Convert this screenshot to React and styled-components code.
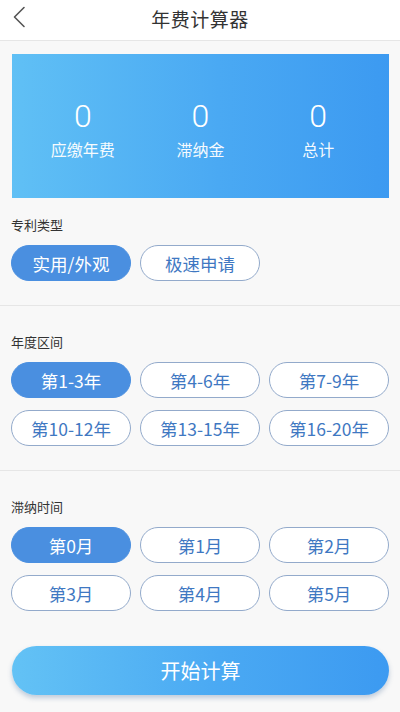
import React, { useState } from 'react';
import styled, { createGlobalStyle } from 'styled-components';

const GlobalStyle = createGlobalStyle`
  * { box-sizing: border-box; }
  body {
    margin: 0;
    background: #f8f8f8;
    font-family: "Noto Sans CJK SC", "Noto Sans", sans-serif;
    color: #333;
  }
`;

const patentTypes = ['实用/外观', '极速申请'];
const yearRanges = ['第1-3年', '第4-6年', '第7-9年', '第10-12年', '第13-15年', '第16-20年'];
const lateMonths = ['第0月', '第1月', '第2月', '第3月', '第4月', '第5月'];

const totals = [
  { value: 0, label: '应缴年费' },
  { value: 0, label: '滞纳金' },
  { value: 0, label: '总计' }
];

const App = () => {
  const [type, setType] = useState(0);
  const [year, setYear] = useState(0);
  const [month, setMonth] = useState(0);

  return (
    <Page>
      <GlobalStyle />
      <Header>
        <BackButton aria-label="返回">
          <svg width="14" height="22" viewBox="0 0 14 22" fill="none">
            <path d="M12 1.5 L2.5 11 L12 20.5" stroke="#555" strokeWidth="1.6" strokeLinecap="round" strokeLinejoin="round" />
          </svg>
        </BackButton>
        <Title>年费计算器</Title>
      </Header>

      <CardWrap>
        <ResultCard>
          {totals.map((item) => (
            <ResultItem key={item.label}>
              <ResultValue>{item.value}</ResultValue>
              <ResultLabel>{item.label}</ResultLabel>
            </ResultItem>
          ))}
        </ResultCard>
      </CardWrap>

      <Section $first>
        <SectionLabel>专利类型</SectionLabel>
        <ChipGrid>
          {patentTypes.map((t, i) => (
            <Chip key={t} $active={type === i} onClick={() => setType(i)}>{t}</Chip>
          ))}
        </ChipGrid>
      </Section>

      <Section>
        <SectionLabel>年度区间</SectionLabel>
        <ChipGrid>
          {yearRanges.map((t, i) => (
            <Chip key={t} $active={year === i} onClick={() => setYear(i)}>{t}</Chip>
          ))}
        </ChipGrid>
      </Section>

      <Section $last>
        <SectionLabel>滞纳时间</SectionLabel>
        <ChipGrid>
          {lateMonths.map((t, i) => (
            <Chip key={t} $active={month === i} onClick={() => setMonth(i)}>{t}</Chip>
          ))}
        </ChipGrid>
      </Section>

      <Footer>
        <SubmitButton>开始计算</SubmitButton>
      </Footer>
    </Page>
  );
};

const Page = styled.div`
  width: 400px;
  min-height: 712px;
  background: #f8f8f8;
`;

const Header = styled.header`
  position: relative;
  height: 41px;
  background: #fff;
  border-bottom: 1px solid #e6e6e6;
  display: flex;
  align-items: center;
  justify-content: center;
`;

const BackButton = styled.button`
  position: absolute;
  left: 7px;
  top: 3px;
  width: 24px;
  height: 28px;
  padding: 0;
  border: none;
  background: none;
  display: flex;
  align-items: center;
  justify-content: center;
`;

const Title = styled.h1`
  margin: 0 0 4px;
  font-size: 19px;
  font-weight: 400;
  color: #333;
  letter-spacing: 0.5px;
`;

const CardWrap = styled.div`
  padding: 13px 11px 0 12px;
`;

const ResultCard = styled.div`
  height: 144px;
  padding: 4px 12px 0;
  display: grid;
  grid-template-columns: repeat(3, 1fr);
  align-items: center;
  background: linear-gradient(90deg, #60c0f5 0%, #4aa9f3 55%, #3c9af1 100%);
`;

const ResultItem = styled.div`
  display: flex;
  flex-direction: column;
  align-items: center;
  color: #fff;
`;

const ResultValue = styled.div`
  font-family: Roboto, "Noto Sans", sans-serif;
  font-weight: 300;
  font-size: 32px;
  line-height: 38px;
`;

const ResultLabel = styled.div`
  font-size: 16px;
  line-height: 22px;
  margin-top: 3px;
  opacity: 0.95;
`;

const Section = styled.section`
  padding: ${(p) => (p.$first ? '19px' : '28px')} 11px ${(p) => (p.$last ? '0' : '24px')};
  border-bottom: ${(p) => (p.$last ? 'none' : '1px solid #e6e6e6')};
`;

const SectionLabel = styled.div`
  font-size: 13px;
  line-height: 16px;
  color: #333;
  margin-bottom: 12px;
`;

const ChipGrid = styled.div`
  display: grid;
  grid-template-columns: repeat(3, 120px);
  column-gap: 9px;
  row-gap: 12px;
`;

const Chip = styled.button`
  height: 36px;
  border-radius: 18px;
  font-family: inherit;
  font-size: 17.5px;
  padding: 0;
  cursor: pointer;
  border: 1px solid ${(p) => (p.$active ? '#4a8fe0' : '#93aacb')};
  background: ${(p) => (p.$active ? '#4a8fe0' : '#fff')};
  color: ${(p) => (p.$active ? '#fff' : '#3f78c2')};
`;

const Footer = styled.div`
  padding: 35px 11px 0 12px;
`;

const SubmitButton = styled.button`
  width: 100%;
  height: 49px;
  border: none;
  border-radius: 25px;
  font-family: inherit;
  font-size: 20px;
  color: #fff;
  background: linear-gradient(90deg, #63c2f5 0%, #4aa9f3 55%, #3c9af1 100%);
  box-shadow: 0 3px 5px rgba(60, 100, 150, 0.3);
  cursor: pointer;
`;

export default App;
